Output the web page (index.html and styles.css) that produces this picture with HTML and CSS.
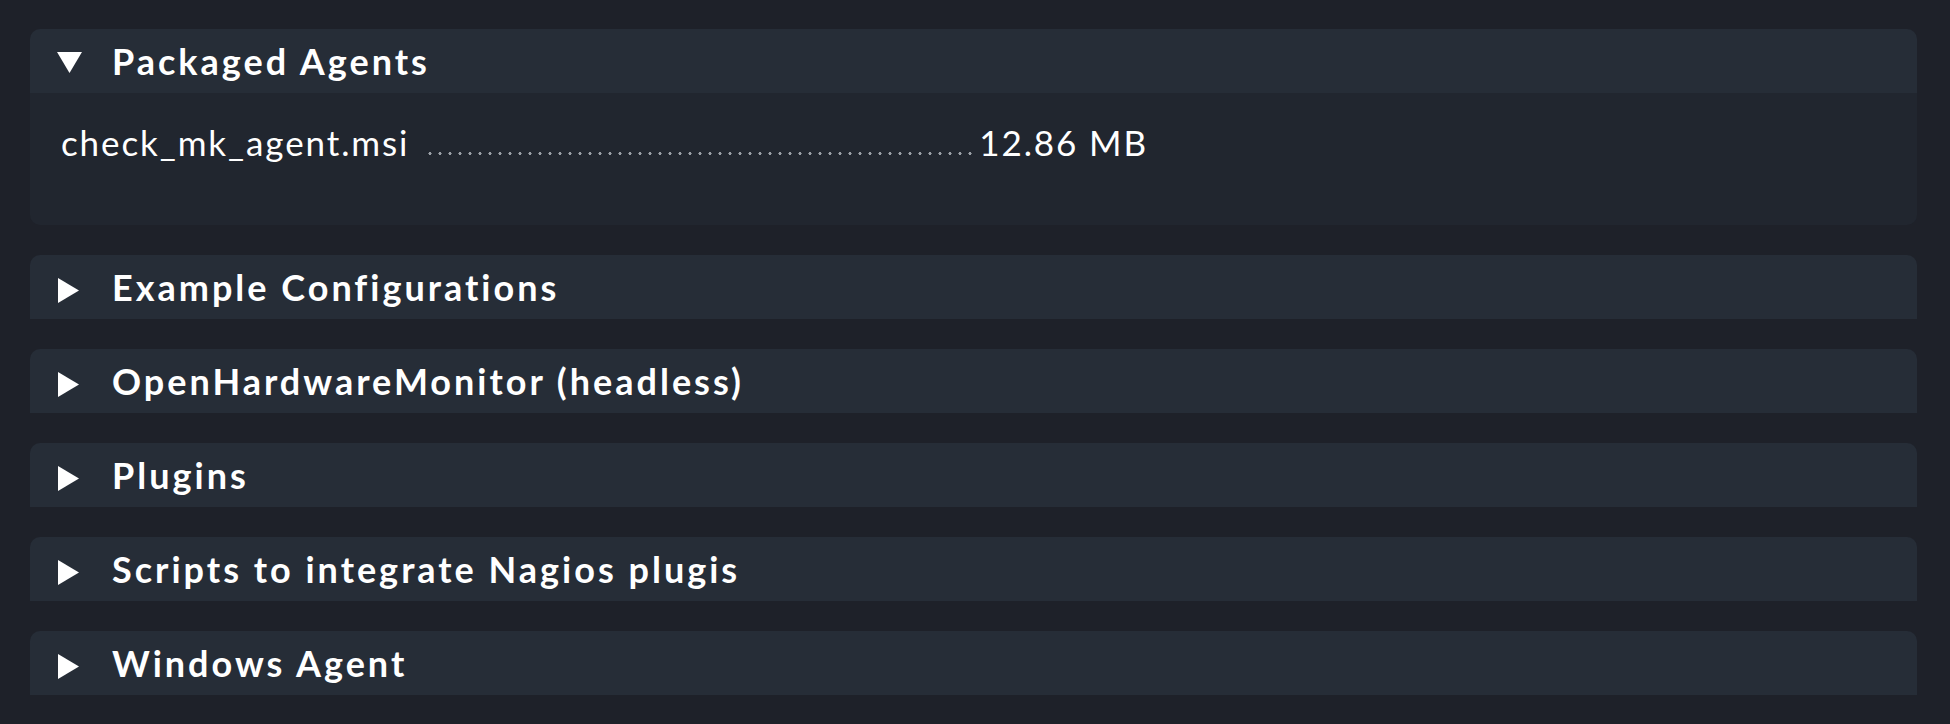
FILE: index.html
```html
<!DOCTYPE html>
<html>
<head>
<meta charset="utf-8">
<link rel="stylesheet" href="styles.css">
</head>
<body>
<div class="page">
  <section class="card open">
    <div class="card-head">
      <svg class="tri" width="25" height="21" viewBox="0 0 25 21"><polygon points="0,0 25,0 12.5,21" fill="#fff"/></svg>
      <span class="title">Packaged Agents</span>
    </div>
    <div class="card-body">
      <div class="file-row">
        <span class="fname">check_mk_agent.msi</span>
        <span class="leader"></span>
        <span class="fsize">12.86 MB</span>
      </div>
    </div>
  </section>
  <section class="card">
    <div class="card-head">
      <svg class="tri" width="21" height="25" viewBox="0 0 21 25"><polygon points="0,0 21,12.5 0,25" fill="#fff"/></svg>
      <span class="title">Example Configurations</span>
    </div>
  </section>
  <section class="card">
    <div class="card-head">
      <svg class="tri" width="21" height="25" viewBox="0 0 21 25"><polygon points="0,0 21,12.5 0,25" fill="#fff"/></svg>
      <span class="title">OpenHardwareMonitor (headless)</span>
    </div>
  </section>
  <section class="card">
    <div class="card-head">
      <svg class="tri" width="21" height="25" viewBox="0 0 21 25"><polygon points="0,0 21,12.5 0,25" fill="#fff"/></svg>
      <span class="title">Plugins</span>
    </div>
  </section>
  <section class="card">
    <div class="card-head">
      <svg class="tri" width="21" height="25" viewBox="0 0 21 25"><polygon points="0,0 21,12.5 0,25" fill="#fff"/></svg>
      <span class="title">Scripts to integrate Nagios plugis</span>
    </div>
  </section>
  <section class="card">
    <div class="card-head">
      <svg class="tri" width="21" height="25" viewBox="0 0 21 25"><polygon points="0,0 21,12.5 0,25" fill="#fff"/></svg>
      <span class="title">Windows Agent</span>
    </div>
  </section>
</div>
</body>
</html>
```
FILE: styles.css
```css
html, body {
  margin: 0;
  padding: 0;
  background: #1e2129;
  height: 100%;
}
body {
  font-family: Lato, "Open Sans", sans-serif;
  color: #ffffff;
}
.page {
  display: flex;
  flex-direction: column;
  gap: 30px;
  padding: 29px 33px 0 30px;
}
.card {
  border-radius: 10px 10px 0 0;
  overflow: hidden;
}
.card.open {
  border-radius: 10px;
}
.card-head {
  height: 64px;
  background: #262d37;
  display: flex;
  align-items: center;
  box-sizing: border-box;
  padding-left: 27px;
}
.card.open .card-head .tri {
  margin-left: 0;
  margin-right: 30px;
  margin-top: 3px;
}
.tri {
  flex: none;
  margin-left: 1px;
  margin-right: 33px;
  margin-top: 6px;
}
.title {
  font-weight: bold;
  font-size: 36px;
  letter-spacing: 3px;
}
.card-body {
  background: #21262f;
  height: 132px;
  box-sizing: border-box;
  padding: 28px 0 0 31px;
}
.file-row {
  display: flex;
  align-items: baseline;
  font-size: 35px;
  letter-spacing: 1.9px;
  width: 1087px;
}
.fname {
  flex: none;
}
.leader {
  flex: 1;
  height: 5px;
  margin: 0 6px 0 16px;
  background-image: radial-gradient(circle, #9a9fa6 1.4px, transparent 1.7px);
  background-size: 10px 5px;
  background-position: 0 0;
  background-repeat: repeat-x;
}
.fsize {
  flex: none;
}
```
